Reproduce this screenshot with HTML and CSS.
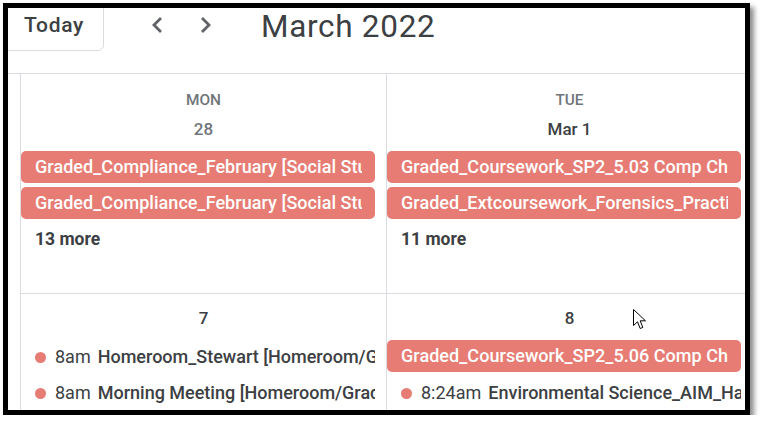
FILE: index.html
```html
<!DOCTYPE html>
<html>
<head>
<meta charset="utf-8">
<link rel="stylesheet" href="styles.css">
</head>
<body>
<div class="frame">
  <div class="screen">
    <header class="toolbar">
      <button class="today">Today</button>
      <svg class="chev chev-left" width="16" height="20" viewBox="0 0 16 20"><polyline points="11,3 4,10 11,17" /></svg>
      <svg class="chev chev-right" width="16" height="20" viewBox="0 0 16 20"><polyline points="5,3 12,10 5,17" /></svg>
      <h1 class="title">March 2022</h1>
    </header>
    <div class="month">
      <div class="cell top">
        <div class="weekday">MON</div>
        <div class="date muted">28</div>
        <div class="chip"><span class="chip-text">Graded_Compliance_February [Social Studies]</span></div>
        <div class="chip"><span class="chip-text">Graded_Compliance_February [Social Studies]</span></div>
        <div class="more">13 more</div>
      </div>
      <div class="cell top">
        <div class="weekday">TUE</div>
        <div class="date">Mar 1</div>
        <div class="chip"><span class="chip-text">Graded_Coursework_SP2_5.03 Comp Check</span></div>
        <div class="chip"><span class="chip-text">Graded_Extcoursework_Forensics_Practice</span></div>
        <div class="more">11 more</div>
      </div>
      <div class="cell">
        <div class="date">7</div>
        <div class="item"><span class="dot"></span><span class="time">8am</span><span class="name">Homeroom_Stewart [Homeroom/Grade 8]</span></div>
        <div class="item"><span class="dot"></span><span class="time">8am</span><span class="name">Morning Meeting [Homeroom/Grade 8]</span></div>
      </div>
      <div class="cell">
        <div class="date">8</div>
        <div class="chip"><span class="chip-text">Graded_Coursework_SP2_5.06 Comp Check</span></div>
        <div class="item"><span class="dot"></span><span class="time">8:24am</span><span class="name">Environmental Science_AIM_Hall</span></div>
      </div>
    </div>
    <svg class="cursor" width="14" height="22" viewBox="0 0 14 22"><path d="M0.5,0.5 L0.5,16.5 L4.5,12.8 L7.2,19.5 L9.8,18.4 L7.2,11.8 L12.5,11.8 Z" /></svg>
  </div>
</div>
</body>
</html>
```
FILE: styles.css
```css
html, body {
  margin: 0;
  padding: 0;
  background: #ffffff;
}

body {
  font-family: Roboto, "Liberation Sans", Arial, sans-serif;
  color: #3c4043;
}

.frame {
  margin: 3px 0 0 3px;
  width: 747px;
  height: 412px;
  box-sizing: border-box;
  border: 5px solid #000000;
  box-shadow: 4px 4px 5px rgba(0, 0, 0, 0.45);
  background: #ffffff;
}

.screen {
  position: relative;
  width: 100%;
  height: 100%;
  overflow: hidden;
}

.toolbar {
  display: flex;
  align-items: flex-start;
  height: 65px;
  border-bottom: 1px solid #dadce0;
}

.today {
  display: flex;
  align-items: center;
  flex: none;
  width: 106px;
  height: 53px;
  margin: -10px 0 0 -10px;
  padding: 0 0 0 25px;
  box-sizing: border-box;
  border: 1px solid #dadce0;
  border-radius: 6px;
  background: #ffffff;
  font-family: Roboto, "Liberation Sans", Arial, sans-serif;
  font-size: 21px;
  font-weight: 500;
  letter-spacing: 0.7px;
  color: #3c4043;
}

.chev {
  flex: none;
  margin-top: 7px;
}

.chev polyline {
  fill: none;
  stroke: #5f6368;
  stroke-width: 2.8;
}

.chev-left {
  margin-left: 46px;
}

.chev-right {
  margin-left: 31px;
}

.title {
  margin: -1px 0 0 48px;
  font-size: 31.5px;
  font-weight: 400;
  letter-spacing: 0.7px;
  line-height: 40px;
  color: #3c4043;
  white-space: nowrap;
}

.month {
  display: grid;
  grid-template-columns: 366px 366px;
  grid-template-rows: 220px auto;
  width: max-content;
  margin-left: 12px;
}

.cell {
  border-left: 1px solid #dadce0;
  padding-top: 8px;
  height: 200px;
}

.cell.top {
  border-bottom: 1px solid #dadce0;
  height: 211px;
}

.weekday {
  margin-top: 6px;
  line-height: 25px;
  font-size: 15.4px;
  font-weight: 500;
  color: #70757a;
  text-align: center;
}

.date {
  line-height: 32px;
  margin-bottom: 6px;
  font-size: 17px;
  font-weight: 500;
  color: #3c4043;
  text-align: center;
}

.date.muted {
  color: #70757a;
}

.chip {
  height: 32px;
  margin: 0 11px 4px 0;
  padding: 0 13px 0 14px;
  border-radius: 5px;
  background: #e67c73;
  color: #ffffff;
  font-size: 18px;
  font-weight: 500;
  letter-spacing: 0.05px;
  line-height: 32px;
}

.chip-text {
  display: block;
  white-space: nowrap;
  overflow: hidden;
}

.more {
  height: 32px;
  padding-left: 14px;
  font-size: 17.5px;
  font-weight: 700;
  line-height: 32px;
  color: #3c4043;
}

.item {
  display: flex;
  align-items: center;
  height: 32px;
  margin: 0 11px 4px 0;
  padding-left: 14px;
  white-space: nowrap;
  overflow: hidden;
  font-size: 18px;
  color: #3c4043;
}

.dot {
  flex: none;
  width: 11px;
  height: 11px;
  margin: 2px 9px 0 0;
  border-radius: 50%;
  background: #e67c73;
}

.time {
  flex: none;
  margin-right: 7px;
  font-weight: 400;
}

.name {
  font-weight: 500;
}

.cursor {
  position: absolute;
  left: 625px;
  top: 301px;
}

.cursor path {
  fill: #ffffff;
  stroke: #000000;
  stroke-width: 1;
  stroke-linejoin: miter;
}
```
